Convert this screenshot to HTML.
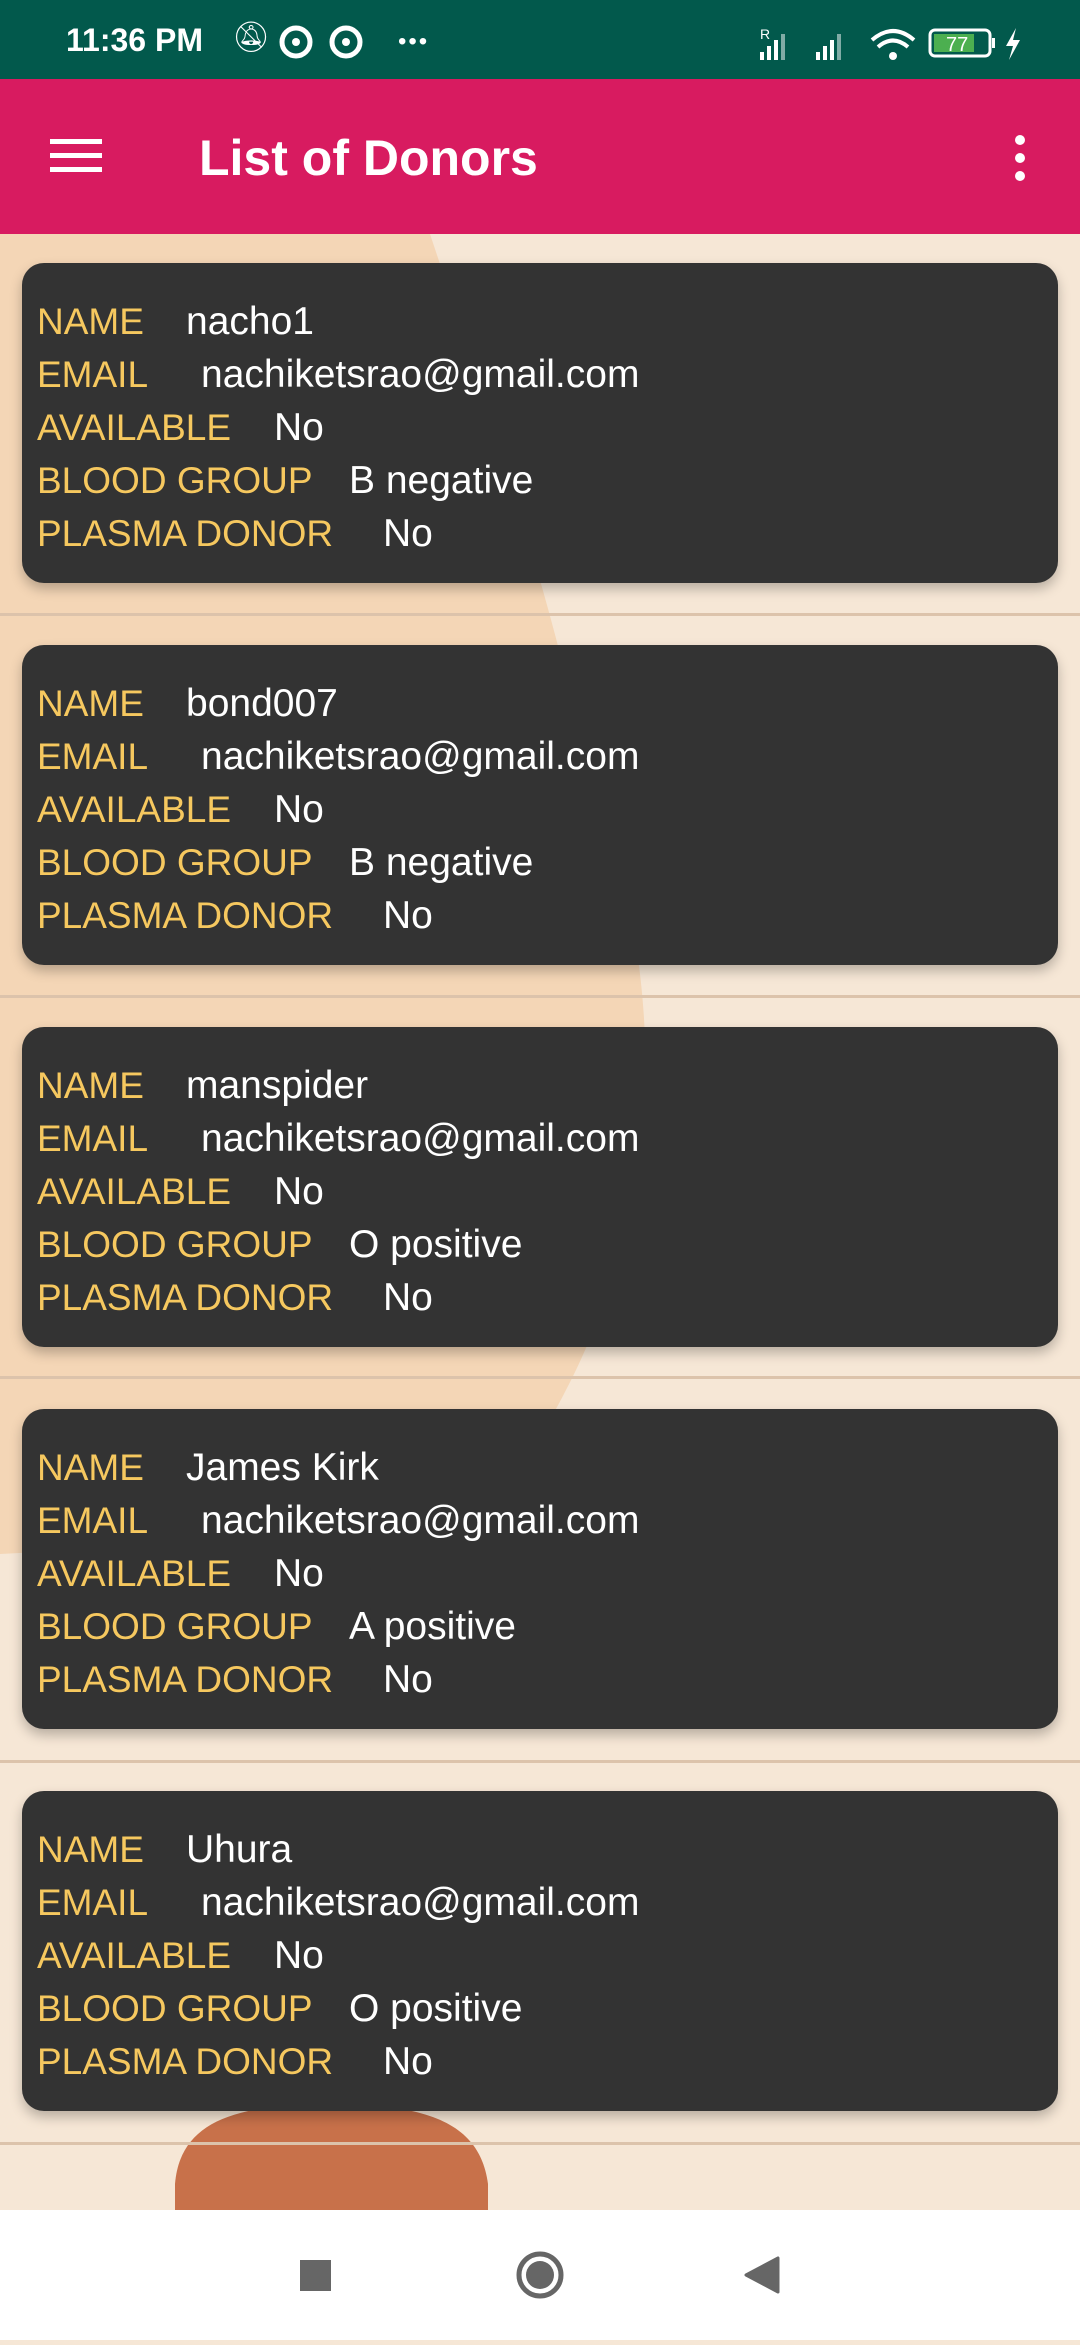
<!DOCTYPE html>
<html><head><meta charset="utf-8"><style>
body{margin:0;width:1080px;height:2340px;overflow:hidden;font-family:"Liberation Sans",sans-serif;position:relative;background:#f6e7d6}
.sb{position:absolute;left:0;top:0;width:1080px;height:79px;background:#02594c;color:#fff}
.ab{position:absolute;left:0;top:79px;width:1080px;height:155px;background:#d81b60;color:#fff}
.card{position:absolute;left:22px;width:1036px;height:320px;background:#333;border-radius:22px;box-shadow:0 6px 12px rgba(0,0,0,.25)}
.r{position:absolute;left:15px;font-size:37px;white-space:nowrap;line-height:40px}
.l{color:#f6c85f}.v{color:#fff;position:absolute;font-size:39px}
.line{position:absolute;left:0;width:1080px;height:3px;background:#dcc3ab}
.nav{position:absolute;left:0;top:2210px;width:1080px;height:130px;background:#fff}
</style></head><body>
<svg style="position:absolute;left:0;top:234px" width="1080" height="1976">
<path d="M0 0 L430 0 C470 120 530 300 560 420 C620 600 660 760 640 900 C620 1050 590 1120 530 1220 C480 1290 420 1300 0 1320 Z" fill="#f4d6b6"/>
<path d="M175 1976 L175 1950 C180 1890 230 1870 330 1870 C430 1870 480 1890 488 1950 L488 1976 Z" fill="#c8714a"/>
</svg>
<div class="line" style="top:613px"></div>
<div class="line" style="top:995px"></div>
<div class="line" style="top:1376px"></div>
<div class="line" style="top:1760px"></div>
<div class="line" style="top:2142px"></div>

<div class="sb">
<div style="position:absolute;left:66px;top:22px;font-size:32px;font-weight:bold">11:36 PM</div>
<div style="position:absolute;left:232px;top:20px;font-size:30px">🔕︎</div>
<svg style="position:absolute;left:278px;top:24px" width="90" height="40"><circle cx="18" cy="18" r="14" stroke="#fff" stroke-width="5" fill="none"/><circle cx="18" cy="18" r="4" fill="#fff"/><circle cx="68" cy="18" r="14" stroke="#fff" stroke-width="5" fill="none"/><circle cx="68" cy="18" r="4" fill="#fff"/></svg>
<div style="position:absolute;left:398px;top:28px;font-size:24px;letter-spacing:2px">•••</div>
<svg style="position:absolute;left:758px;top:26px" width="280" height="40">
<text x="2" y="13" font-size="14" fill="#fff" font-family="Liberation Sans">R</text>
<rect x="2" y="26" width="4" height="8" fill="#fff"/><rect x="9" y="20" width="4" height="14" fill="#fff"/><rect x="16" y="14" width="4" height="20" fill="#fff"/><rect x="23" y="8" width="4" height="26" fill="#fff" opacity=".5"/>
<rect x="58" y="26" width="4" height="8" fill="#fff"/><rect x="65" y="20" width="4" height="14" fill="#fff"/><rect x="72" y="14" width="4" height="20" fill="#fff"/><rect x="79" y="8" width="4" height="26" fill="#fff" opacity=".5"/>
<path d="M114 14 Q135 -4 156 14" stroke="#fff" stroke-width="4" fill="none"/><path d="M120 21 Q135 8 150 21" stroke="#fff" stroke-width="4" fill="none"/><circle cx="135" cy="30" r="4" fill="#fff"/>
<rect x="172" y="4" width="60" height="26" rx="5" stroke="#fff" stroke-width="3" fill="none"/><rect x="176" y="8" width="40" height="18" fill="#4caf50"/><rect x="234" y="12" width="3" height="10" fill="#fff"/>
<text x="188" y="25" font-size="20" fill="#fff" font-family="Liberation Sans">77</text>
<path d="M258 2 L248 20 L255 20 L251 34 L262 14 L255 14 Z" fill="#fff"/>
</svg>
</div>
<div class="ab">
<svg style="position:absolute;left:50px;top:60px" width="54" height="36"><rect y="0" width="52" height="5" fill="#fff"/><rect y="14" width="52" height="5" fill="#fff"/><rect y="28" width="52" height="5" fill="#fff"/></svg>
<div style="position:absolute;left:199px;top:50px;font-size:50px;font-weight:bold">List of Donors</div>
<svg style="position:absolute;left:1010px;top:55px" width="20" height="50"><circle cx="10" cy="6" r="5" fill="#fff"/><circle cx="10" cy="24" r="5" fill="#fff"/><circle cx="10" cy="42" r="5" fill="#fff"/></svg>
</div>

<div class="card" style="top:263px">
<div class="r l" style="top:39px">NAME<span class="v" style="left:149px">nacho1</span></div>
<div class="r l" style="top:92px">EMAIL<span class="v" style="left:164px">nachiketsrao@gmail.com</span></div>
<div class="r l" style="top:145px">AVAILABLE<span class="v" style="left:237px">No</span></div>
<div class="r l" style="top:198px">BLOOD GROUP<span class="v" style="left:312px">B negative</span></div>
<div class="r l" style="top:251px">PLASMA DONOR<span class="v" style="left:346px">No</span></div>
</div>
<div class="card" style="top:645px">
<div class="r l" style="top:39px">NAME<span class="v" style="left:149px">bond007</span></div>
<div class="r l" style="top:92px">EMAIL<span class="v" style="left:164px">nachiketsrao@gmail.com</span></div>
<div class="r l" style="top:145px">AVAILABLE<span class="v" style="left:237px">No</span></div>
<div class="r l" style="top:198px">BLOOD GROUP<span class="v" style="left:312px">B negative</span></div>
<div class="r l" style="top:251px">PLASMA DONOR<span class="v" style="left:346px">No</span></div>
</div>
<div class="card" style="top:1027px">
<div class="r l" style="top:39px">NAME<span class="v" style="left:149px">manspider</span></div>
<div class="r l" style="top:92px">EMAIL<span class="v" style="left:164px">nachiketsrao@gmail.com</span></div>
<div class="r l" style="top:145px">AVAILABLE<span class="v" style="left:237px">No</span></div>
<div class="r l" style="top:198px">BLOOD GROUP<span class="v" style="left:312px">O positive</span></div>
<div class="r l" style="top:251px">PLASMA DONOR<span class="v" style="left:346px">No</span></div>
</div>
<div class="card" style="top:1409px">
<div class="r l" style="top:39px">NAME<span class="v" style="left:149px">James Kirk</span></div>
<div class="r l" style="top:92px">EMAIL<span class="v" style="left:164px">nachiketsrao@gmail.com</span></div>
<div class="r l" style="top:145px">AVAILABLE<span class="v" style="left:237px">No</span></div>
<div class="r l" style="top:198px">BLOOD GROUP<span class="v" style="left:312px">A positive</span></div>
<div class="r l" style="top:251px">PLASMA DONOR<span class="v" style="left:346px">No</span></div>
</div>
<div class="card" style="top:1791px">
<div class="r l" style="top:39px">NAME<span class="v" style="left:149px">Uhura</span></div>
<div class="r l" style="top:92px">EMAIL<span class="v" style="left:164px">nachiketsrao@gmail.com</span></div>
<div class="r l" style="top:145px">AVAILABLE<span class="v" style="left:237px">No</span></div>
<div class="r l" style="top:198px">BLOOD GROUP<span class="v" style="left:312px">O positive</span></div>
<div class="r l" style="top:251px">PLASMA DONOR<span class="v" style="left:346px">No</span></div>
</div>

<div class="nav">
<svg width="1080" height="130">
<rect x="300" y="50" width="31" height="31" fill="#666"/>
<circle cx="540" cy="65" r="21" stroke="#666" stroke-width="5" fill="none"/><circle cx="540" cy="65" r="14" fill="#666"/>
<path d="M778 48 L778 82 L746 65 Z" fill="#666" stroke="#666" stroke-width="3" stroke-linejoin="round"/>
</svg>
</div>
</body></html>
